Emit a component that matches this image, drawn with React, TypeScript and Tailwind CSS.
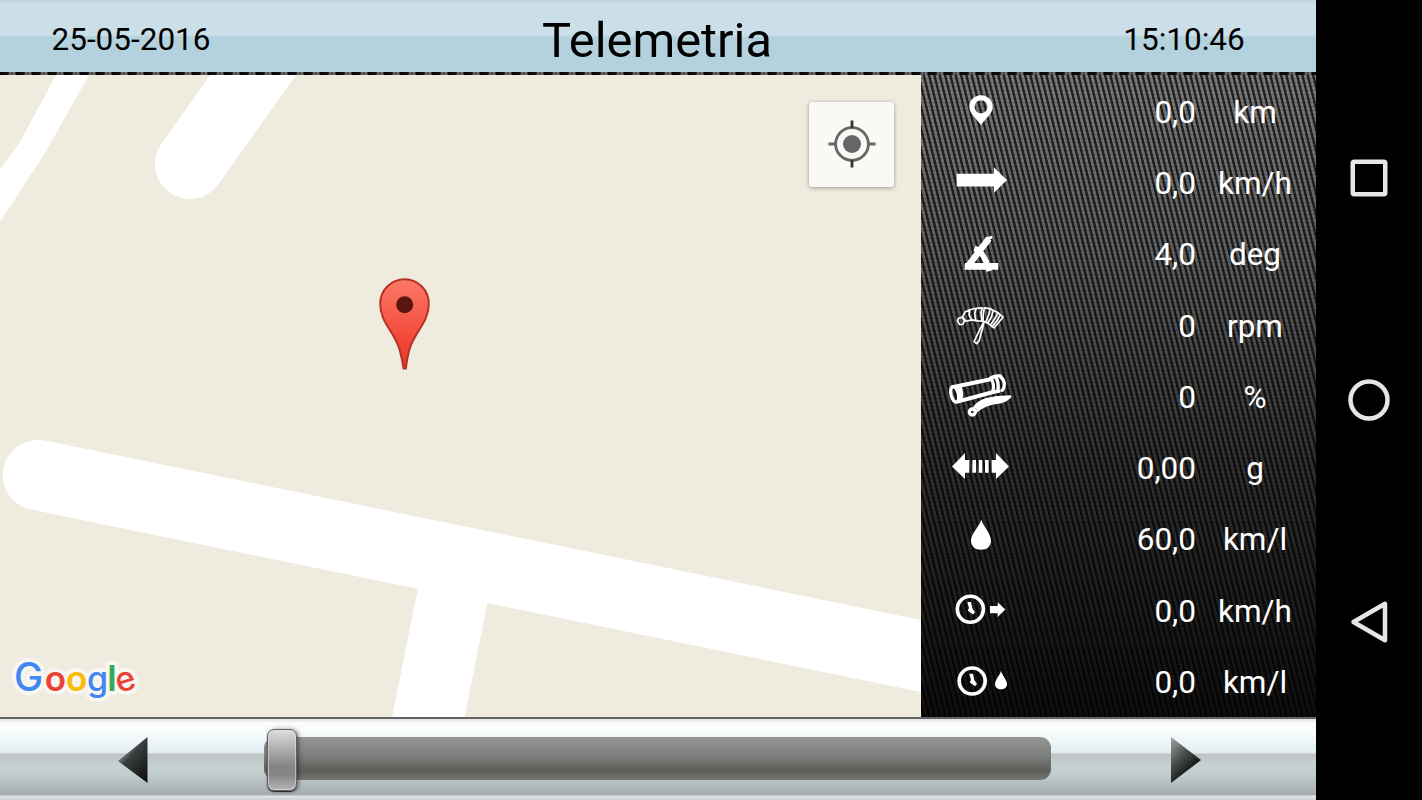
import type { ReactNode } from 'react';

interface Reading {
  id: string;
  value: string;
  unit: string;
  viewBox: string;
  icon: ReactNode;
}

const readings: Reading[] = [
  {
    id: 'distance',
    value: '0,0',
    unit: 'km',
    viewBox: '33 -12 240 213.75',
    icon: (
      <path
        fillRule="evenodd"
        d="M153 46C133 46 118 61 118 80C118 100 138 114 153 135C168 114 188 100 188 80C188 61 173 46 153 46ZM153 61A19.500 19.500 0 1 1 153 100A19.500 19.500 0 1 1 153 61Z"
      />
    )
  },
  {
    id: 'speed',
    value: '0,0',
    unit: 'km/h',
    viewBox: '33 201.75 240 213.75',
    icon: <path d="M80 282H192V263L231 301L192 339V320H80Z" />
  },
  {
    id: 'angle',
    value: '4,0',
    unit: 'deg',
    viewBox: '33 415.5 240 213.75',
    icon: (
      <g fill="none" stroke="currentColor" strokeLinejoin="round">
        <path d="M110 562L177 474" strokeWidth="19" />
        <path d="M168 475L187 470" strokeWidth="9" />
        <path d="M105 557.500H205" strokeWidth="20" />
        <path d="M133 504L146 509Q166 530 174 560L178 572" strokeWidth="17" />
        <path d="M101 567L132 527L120 560Z" fill="currentColor" stroke="none" />
      </g>
    )
  },
  {
    id: 'rpm',
    value: '0',
    unit: 'rpm',
    viewBox: '33 -0.75 240 213.75',
    icon: (
      <g fill="none" stroke="currentColor" strokeWidth="5" strokeLinejoin="round">
        <path d="M83 93L85 84L97 81L103 92L99 102L89 103Z" />
        <path d="M97 80L106 64L119 61L117 74L125 89L108 93Z" />
        <path d="M113 60L139 54L134 70L137 91L125 89" />
        <path d="M139 54L157 53L153 69L156 93L137 91" />
        <path d="M163 53L180 55L176 75L167 96L159 92L160 69Z" />
        <path d="M180 55L190 61L184 81L173 99L167 96" />
        <path d="M190 61L204 67L193 88L181 104L173 99" />
        <path d="M204 67L211 74L199 94L186 109L181 104" />
        <path d="M211 74L219 81L192 113L186 109" />
        <path d="M162 94L150 117L132 154L140 160L147 152L158 113Z" />
      </g>
    )
  },
  {
    id: 'throttle',
    value: '0',
    unit: '%',
    viewBox: '33 213 240 213.75',
    icon: (
      <g fill="none" stroke="currentColor" strokeLinecap="round" strokeLinejoin="round">
        <ellipse cx="74" cy="313" rx="11" ry="24" strokeWidth="10" transform="rotate(-14 74 313)" />
        <path d="M74 290L182 268M85 334L190 306M88 292Q98 308 90 331" strokeWidth="12" />
        <path d="M182 264Q195 281 188 306M195 259Q209 276 203 304M208 258Q221 266 223 280Q224 292 217 301M182 264Q196 256 211 258M187 307L207 303" strokeWidth="10" />
        <path d="M130 357Q143 336 166 329L202 322L240 320Q224 335 204 337Q166 341 141 362" strokeWidth="8" />
        <path d="M141 349Q156 335 190 329L222 327" strokeWidth="16" />
        <circle cx="127" cy="366" r="9" strokeWidth="10" />
      </g>
    )
  },
  {
    id: 'force',
    value: '0,00',
    unit: 'g',
    viewBox: '33 426.75 240 213.75',
    icon: (
      <path d="M66 530L105 490V511H118V549H105V568ZM237 530L198 490V511H185V549H198V568ZM127 511H138V549H127ZM146 511H157V549H146ZM165 511H176V549H165Z" />
    )
  },
  {
    id: 'consumption',
    value: '60,0',
    unit: 'km/l',
    viewBox: '33 10.5 240 213.75',
    icon: <path d="M154 58C148 78 123 100 123 121C123 138 136 148 153 148C170 148 183 138 183 121C183 100 160 78 154 58Z" />
  },
  {
    id: 'average-speed',
    value: '0,0',
    unit: 'km/h',
    viewBox: '33 224.25 240 213.75',
    icon: (
      <>
        <circle cx="121" cy="327" r="39" fill="none" stroke="currentColor" strokeWidth="11" />
        <path d="M112 305H123L127 324L135 336L129 343L113 331L117 324Z" />
        <path d="M180 317H203V306L226 328L203 350V339H180Z" />
      </>
    )
  },
  {
    id: 'average-consumption',
    value: '0,0',
    unit: 'km/l',
    viewBox: '33 438 240 213.75',
    icon: (
      <>
        <circle cx="126.500" cy="543" r="39" fill="none" stroke="currentColor" strokeWidth="11" />
        <path d="M118 521H129L133 540L141 552L135 559L119 547L123 540Z" />
        <path d="M213 513C209 527 195 540 195 552C195 562 203 568 213 568C223 568 231 562 231 552C231 540 217 527 213 513Z" />
      </>
    )
  }
];

const logoLetters = [
  { char: 'G', x: 14, size: 39, weight: 500, color: '#4285f4' },
  { char: 'o', x: 44.7, size: 35, weight: 600, color: '#ea4335' },
  { char: 'o', x: 66, size: 35, weight: 600, color: '#fbbc05' },
  { char: 'g', x: 86.9, size: 34, weight: 500, color: '#4285f4' },
  { char: 'l', x: 107.3, size: 36, weight: 600, color: '#34a853' }
];

const GoogleLogo = () => (
  <svg className="absolute bottom-0 left-0 h-[72px] w-[150px]" viewBox="0 645 150 72" aria-label="Google">
    <g fontFamily="Inter, sans-serif" strokeWidth="8" strokeLinejoin="round">
      {logoLetters.map((letter, index) => (
        <text key={index} x={letter.x} y="690.500" fontSize={letter.size} fontWeight={letter.weight} stroke="#f8f6f1" fill="#f8f6f1">
          {letter.char}
        </text>
      ))}
      <text x="115.500" y="690.500" fontSize="34" fontWeight="500" stroke="#f8f6f1" fill="#f8f6f1" transform="rotate(-17 126 681)">
        e
      </text>
    </g>
    <g fontFamily="Inter, sans-serif" aria-hidden="true">
      {logoLetters.map((letter, index) => (
        <text key={index} x={letter.x} y="690.500" fontSize={letter.size} fontWeight={letter.weight} fill={letter.color}>
          {letter.char}
        </text>
      ))}
      <text x="115.500" y="690.500" fontSize="34" fontWeight="500" fill="#ea4335" transform="rotate(-17 126 681)">
        e
      </text>
    </g>
  </svg>
);

const MapView = () => (
  <div className="relative w-[921px] shrink-0 overflow-hidden bg-[#efebdf]">
    <svg className="block h-full w-full" viewBox="0 75 921 642">
      <defs>
        <linearGradient id="marker" x1="0" y1="0" x2="0" y2="1">
          <stop offset="0" stopColor="#fc7867" />
          <stop offset="0.65" stopColor="#f34a3b" />
          <stop offset="1" stopColor="#dd3a2a" />
        </linearGradient>
      </defs>
      <path d="M56 75H89L45 153L0 222V170L20 142Z" fill="#fff" />
      <path d="M190 164L282 34" stroke="#fff" strokeWidth="70" strokeLinecap="round" />
      <path d="M38 475L960 664" stroke="#fff" strokeWidth="70.500" strokeLinecap="round" />
      <path d="M418 588L488 600L464 720H391.500Z" fill="#fff" />
      <path
        d="M404.700 279.300C390.800 279.300 380.200 290.400 380.200 303.800C380.200 323 394.500 331 399.700 350C401.500 356.500 402.800 363 403.600 368.600H405.800C406.500 363 407.500 356.500 409.300 350C414.500 331 428.800 323 428.800 303.800C428.800 290.400 418.300 279.300 404.700 279.300Z"
        fill="url(#marker)"
        stroke="#b63326"
        strokeWidth="2"
      />
      <circle cx="404.700" cy="304.800" r="8.500" fill="#5b150f" />
    </svg>
    <button
      type="button"
      className="absolute top-[27px] right-[27px] flex size-[85px] items-center justify-center rounded-[3px] bg-[#faf9f6] pb-px shadow-[0_1px_4px_rgba(0,0,0,0.35)]"
    >
      <svg className="size-12" viewBox="0 0 48 48" fill="none" stroke="#666" strokeWidth="2.800">
        <circle cx="24" cy="24" r="16.400" />
        <circle cx="24" cy="24" r="9" fill="#666" stroke="none" />
        <path d="M0.500 24H8M40 24H47.500" />
        <path d="M24 0.500V8M24 40V47.500" stroke="#333" />
      </svg>
    </button>
    <GoogleLogo />
  </div>
);

const CarbonTexture = () => (
  <svg className="absolute inset-0 h-full w-full" aria-hidden="true">
    <defs>
      <pattern id="carbon" width="16" height="64" patternUnits="userSpaceOnUse">
        <rect width="16" height="64" fill="#202020" />
        <path
          d="M-16 0L0 64M-10.667 0L5.333 64M-5.333 0L10.667 64M0 0L16 64M5.333 0L21.333 64M10.667 0L26.667 64M16 0L32 64"
          stroke="#7c7c7c"
          strokeWidth="2.900"
        />
      </pattern>
      <pattern id="weave" width="16" height="4" patternUnits="userSpaceOnUse">
        <rect y="3" width="16" height="1" fill="#000" fillOpacity="0.2" />
      </pattern>
      <linearGradient id="shade" x1="0" y1="0" x2="0" y2="1">
        <stop offset="0" stopColor="#000" stopOpacity="0" />
        <stop offset="0.3" stopColor="#000" stopOpacity="0.25" />
        <stop offset="0.6" stopColor="#000" stopOpacity="0.6" />
        <stop offset="1" stopColor="#000" stopOpacity="0.88" />
      </linearGradient>
    </defs>
    <rect width="100%" height="100%" fill="url(#carbon)" />
    <rect width="100%" height="100%" fill="url(#weave)" />
    <rect width="100%" height="100%" fill="url(#shade)" />
  </svg>
);

const ReadingsPanel = () => (
  <div className="relative flex flex-1 flex-col overflow-hidden pt-px text-white">
    <CarbonTexture />
    {readings.map((reading) => (
      <div key={reading.id} className="relative flex h-[71.25px] items-center text-[31.5px] leading-none">
        <svg className="ml-5 h-[71.25px] w-20 shrink-0" viewBox={reading.viewBox} fill="currentColor">
          {reading.icon}
        </svg>
        <span className="w-[175px] pt-0.5 text-right">{reading.value}</span>
        <span className="w-[118px] pt-0.5 text-center">{reading.unit}</span>
      </div>
    ))}
  </div>
);

const ControlBar = () => (
  <footer className="flex h-[83px] items-center border-t-2 border-[#62625f] bg-[linear-gradient(180deg,#dfe2e7_0px,#fbfcfd_4px,#fafdfe_11px,#e2eff2_33px,#dfe7e9_34px,#bfc3c6_35px,#c5d2d1_47px,#c2cecd_55px,#a5abaf_76px,#e3e7e9_77px,#cbd0d3_81px)] pb-0.5">
    <svg className="ml-[116px] h-[50px] w-[34px]" viewBox="116 734 34 50">
      <defs>
        <linearGradient id="previous" x1="0" y1="0" x2="0.7" y2="1">
          <stop offset="0.2" stopColor="#b0b3b3" />
          <stop offset="0.48" stopColor="#3b3e3e" />
          <stop offset="1" stopColor="#141616" />
        </linearGradient>
      </defs>
      <path d="M118 761L147.500 737V783Z" fill="url(#previous)" />
    </svg>
    <div className="relative ml-[114px] h-[43px] w-[787px] rounded-[11px] bg-[linear-gradient(180deg,#969796_0%,#7c7e7b_45%,#5d5f5b_78%,#747672_100%)]">
      <div className="absolute -top-[8px] left-[3px] h-[62px] w-[30px] rounded-[7px] border border-[#626262] bg-[linear-gradient(180deg,#dedede_0%,#b1b1b1_30%,#858585_60%,#868686_75%,#b7b7b7_100%)] shadow-[inset_0_0_0_1px_rgba(225,225,225,0.6),0_1px_1px_#222,2px_0_4px_rgba(0,0,0,0.4)]" />
    </div>
    <svg className="ml-[118px] h-[50px] w-[34px]" viewBox="1169 734 34 50">
      <defs>
        <linearGradient id="next" x1="0" y1="0" x2="0.65" y2="1">
          <stop offset="0" stopColor="#a5a7a7" />
          <stop offset="0.45" stopColor="#4b4e4e" />
          <stop offset="0.7" stopColor="#272929" />
          <stop offset="0.9" stopColor="#070808" />
        </linearGradient>
      </defs>
      <path d="M1171 737L1201 760L1171 783Z" fill="url(#next)" />
    </svg>
  </footer>
);

const NavigationBar = () => (
  <nav className="flex w-[106px] flex-col items-center justify-center bg-black text-[#e6e6e6]">
    {[
      <rect key="recents" x="5.750" y="5.750" width="32.500" height="32.500" rx="1.500" />,
      <circle key="home" cx="22" cy="22" r="18.500" />,
      <path key="back" d="M6.500 22L38 3.800V40.200Z" />
    ].map((shape) => (
      <div key={shape.key} className="flex h-[222px] items-center">
        <svg className="size-11" viewBox="0 0 44 44" fill="none" stroke="currentColor" strokeWidth="4.500" strokeLinejoin="round">
          {shape}
        </svg>
      </div>
    ))}
  </nav>
);

const App = () => {
  return (
    <div className="flex h-[800px] w-[1422px] overflow-hidden bg-black font-[Roboto,sans-serif]">
      <main className="flex w-[1316px] shrink-0 flex-col">
        <header className="grid h-[72px] grid-cols-[262px_1fr_264px] items-center bg-[linear-gradient(180deg,#bfd3dd_0px,#cbdfe8_3px,#cbdfe8_35px,#b3d2de_37px,#b3d2de_72px)] pt-2 text-center text-[31.5px] leading-none text-black">
          <span>25-05-2016</span>
          <h1 className="pt-[3px] text-[48.8px] leading-none">Telemetria</h1>
          <span>15:10:46</span>
        </header>
        <div className="h-[3px] bg-[repeating-linear-gradient(90deg,#080808_0px,#111_8px,#777_10px,#333_12px,#888_14px,#111_16px)]" />
        <div className="flex h-[642px]">
          <MapView />
          <ReadingsPanel />
        </div>
        <ControlBar />
      </main>
      <NavigationBar />
    </div>
  );
};

export default App;
